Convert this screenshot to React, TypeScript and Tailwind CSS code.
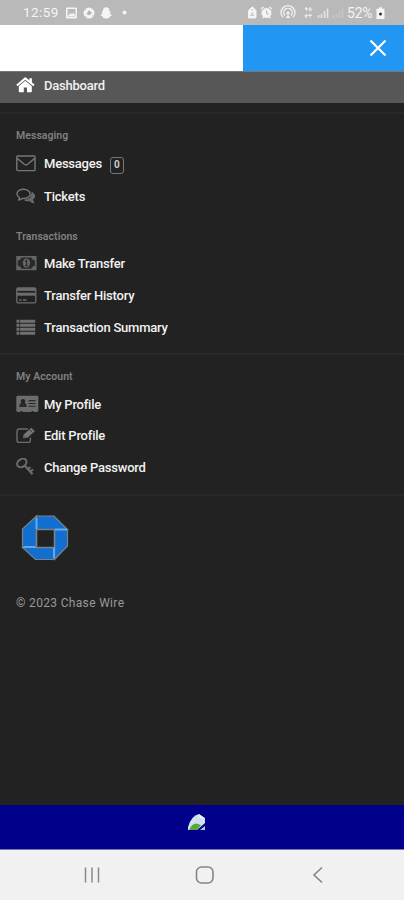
import type { ReactNode } from "react";

const EnvelopeIcon = () => (
  <svg width="20" height="17" viewBox="0 0 20 17" fill="none" stroke="#777" strokeWidth="1.4">
    <rect x="0.8" y="1" width="18.2" height="14.6" rx="0.8" />
    <path d="M1.200 3.400 8.300 9.300Q10 10.600 11.700 9.300L18.600 3.400" />
  </svg>
);

const CommentsIcon = () => (
  <svg width="20" height="17" viewBox="0 0 20 17" fill="none" stroke="#777" strokeWidth="1.4" strokeLinejoin="round">
    <path d="M7.600 1.200C3.900 1.200 1 3.200 1 5.900c0 1.600 1 2.900 2.600 3.800L2.500 12c1.400-.2 2.600-.8 3.500-1.600.5.100 1 .100 1.600.100 3.700 0 6.600-2 6.600-4.600S11.300 1.200 7.600 1.200Z" />
    <path d="M15.600 4.300c1.800.8 2.900 2.200 2.900 3.700 0 1.500-.8 2.700-2.200 3.500l1.500 3.300c-1.700-.2-3.100-1-4.100-2.100-1.800.3-3.600 0-5-.7 4 0 7-2.400 7-6" fill="#666" strokeWidth="0.9" />
  </svg>
);

const MoneyIcon = () => (
  <svg width="21" height="17" viewBox="0 0 21 17">
    <rect x="1" y="1.700" width="18.800" height="12.800" fill="#2a2a2a" stroke="#666" strokeWidth="1.500" />
    <path d="M1 1.700h4.500Q5 5.200 1 5.600ZM19.800 1.700h-4.500Q15.800 5.200 19.800 5.600ZM1 14.500h4.500Q5 11 1 10.600ZM19.800 14.500h-4.500Q15.800 11 19.800 10.600Z" fill="#666" />
    <ellipse cx="10.400" cy="8.100" rx="3.600" ry="4.600" fill="#666" />
    <path d="M9 6.600 10.600 5.400V10.600M8.900 10.700h3.200" stroke="#2a2a2a" strokeWidth="1.100" fill="none" />
  </svg>
);

const CardIcon = () => (
  <svg width="21" height="17" viewBox="0 0 21 17" fill="none" stroke="#6c6c6c">
    <rect x="0.800" y="1" width="19" height="14.800" rx="1.300" strokeWidth="1.300" />
    <path d="M1 2.500h18.600" strokeWidth="2.800" />
    <path d="M1 7.200h18.600" strokeWidth="3" />
    <path d="M3.200 13h2.500M7 13h3.500" strokeWidth="1.300" />
  </svg>
);

const ListIcon = () => (
  <svg width="20" height="17" viewBox="0 0 20 17" fill="none" stroke="#707070" strokeWidth="3.100">
    <path d="M0.500 2.200h2.900M4.100 2.200h15.100M0.500 6.200h2.900M4.100 6.200h15.100M0.500 10.200h2.900M4.100 10.200h15.100M0.500 14.200h2.900M4.100 14.200h15.100" />
  </svg>
);

const AddressCardIcon = () => (
  <svg width="23" height="18" viewBox="0 0 23 18">
    <rect x="0.300" y="0.700" width="22" height="16.300" rx="1.400" fill="#6c6c6c" />
    <circle cx="7" cy="6.300" r="2.200" fill="#222" />
    <path d="M3.300 12Q3.300 8 5.500 8h3Q10.700 8 10.700 12ZM12.500 5h7v1.300h-7ZM12.500 7.900h7v1.200h-7ZM12.500 10.700h7v1h-7ZM4.500 16h2v1h-2ZM15.500 16h2v1h-2Z" fill="#292929" />
  </svg>
);

const EditIcon = () => (
  <svg width="20" height="17" viewBox="0 0 20 17" fill="none" stroke="#6c6c6c" strokeWidth="1.400">
    <path d="M12 2H3.200Q1 2 1 4.200v9Q1 15.400 3.200 15.400h9q2.200 0 2.200-2.200v-2.600" />
    <path d="m7.200 10.900 1-3.600 7.100-6.300 3.300 3.300-7.200 6.100Z" fill="#777" strokeWidth="0.700" />
    <path d="m8.500 9.200 1 1M13.800 2.800l2.600 2.700" stroke="#222" strokeWidth="0.700" />
  </svg>
);

const KeyIcon = () => (
  <svg width="20" height="18" viewBox="0 0 20 18" fill="none" stroke="#6c6c6c">
    <ellipse cx="5.800" cy="5" rx="5" ry="3.800" transform="rotate(-35 5.800 5)" strokeWidth="2" />
    <path d="m8.800 7.800 7.800 8.500M12.200 11l2.200-1.900M14.500 13.500l2.600-2.100" strokeWidth="2.100" />
  </svg>
);

const HomeIcon = () => (
  <svg width="19" height="17" viewBox="0 0 19 17" fill="#fff">
    <path d="M9.300 3.800 2.800 9.200v5.300q0 .8.8.8h4.200v-4.800h3.200v4.800h4q.8 0 .8-.8V9.200Z" />
    <path d="m.9 8.400 8.400-7 8.600 7" fill="none" stroke="#fff" strokeWidth="2" />
    <path d="M13.400 1.200h2.500v5.600l-2.500-2Z" />
  </svg>
);

const StatusBar = () => (
  <div className="flex h-[25px] items-center bg-[#b9b9b9] pl-[23px] pr-[19px] text-[#f5f5f5]">
    <span className="w-[37px] text-[13.500px] leading-none tracking-[0.400px]">12:59</span>
    <svg className="ml-[5px]" width="64" height="16" viewBox="0 0 64 16" fill="#f5f5f5">
      <path fillRule="evenodd" d="M2 2.500h9q1 0 1 1v9q0 1-1 1H2q-1 0-1-1v-9q0-1 1-1ZM2.600 4v7.500h7.900V4ZM3 11l2.400-3 1.600 1.600L8.500 7.500 10.300 11Z" />
      <circle cx="24" cy="8" r="5.500" />
      <path d="m24 5.500 2.500 2.200-2 2.400-2.600-1ZM19.500 5.500l2-1.500M26 3.500l1.500 1.500M20 11l2 1M27 11.500l1-2" fill="#b0b0b0" stroke="#b9b9b9" strokeWidth="0.700" />
      <path d="M41.200 2.200c2.300 0 3.300 1.600 3.200 4l1.400.3-.8 1.500c.4 1.300 1.200 2 2.200 2.500l-2.300 1-.5 1.200-3.200 1-3.200-1-.5-1.200-2.300-1c1-.5 1.800-1.200 2.200-2.500l-.8-1.500 1.400-.3c-.1-2.400.9-4 3.200-4Z" />
      <circle cx="59.500" cy="7.500" r="2" />
    </svg>
    <svg className="ml-auto" width="99" height="17" viewBox="0 0 99 17" fill="none" stroke="#f0f0f0">
      <path d="M1.500 14V6.500L5.300 2.800 9 6.500V14Z" fill="#f5f5f5" />
      <path d="M5.200 5v2M3.700 11.500 5.200 8.700 6.800 11.500Z" stroke="#b9b9b9" strokeWidth="0.800" />
      <circle cx="19.500" cy="9" r="4.600" fill="#f5f5f5" />
      <path d="m14 5 2.500-2M25 5l-2.500-2M15.500 14l1.500-1.500M23.500 14 22 12.500" strokeWidth="1.600" />
      <path d="M19.500 6.300V9l2 1.500" stroke="#b9b9b9" strokeWidth="1.100" />
      <path d="M36 13.500a7 7 0 1 1 10 0M38 11.500a4.200 4.200 0 1 1 6 0" strokeWidth="1.400" />
      <path d="M39.500 13.500q1.500-4 3 0Z" fill="#f5f5f5" />
      <circle cx="41" cy="9" r="1.200" fill="#f5f5f5" />
      <path d="M59.500 7V3l-1.500 2M63 3v4.500l2-2M59.500 9.500V14l-2-2M63 14V9.800l2 2M58 5h7M57.500 11.500h7" strokeWidth="1" opacity="0.850" />
      <path d="M71.500 14v-3M74.500 14V10M77.500 14V7M80.500 14V4.500" strokeWidth="1.700" opacity="0.750" />
      <path d="M86.500 14v-3M89.500 14V10M92.500 14V7M95.500 14V4.500" strokeWidth="1.600" opacity="0.250" />
    </svg>
    <span className="ml-[1px] w-[29px] whitespace-nowrap text-[14px] leading-none tracking-[-0.200px]">52%</span>
    <svg width="9" height="14" viewBox="0 0 9 14">
      <path d="M0.500 2.800h2.500V1.200h3v1.600h2.500V13H.5Z" fill="#f5f5f5" />
      <circle cx="4.500" cy="8" r="1.500" fill="#333" />
    </svg>
  </div>
);

const MenuItem = ({ icon, label, className, children }: { icon: ReactNode; label: string; className: string; children?: ReactNode }) => (
  <a className={`flex items-center pl-4 ${className}`}>
    <span className="w-7 shrink-0">{icon}</span>
    <span className="text-[13px] font-medium leading-none tracking-[-0.220px] text-[#f2f2f2]">{label}</span>
    {children}
  </a>
);

const SectionTitle = ({ children, className }: { children: ReactNode; className: string }) => (
  <h3 className={`flex items-center pl-4 pt-[2px] text-[10.500px] font-semibold leading-none tracking-[0.050px] text-[#808080] ${className}`}>{children}</h3>
);

const Divider = () => <div className="h-[2px] bg-[#292929]" />;

const Logo = () => (
  <svg width="48" height="46" viewBox="0 0 48 46" stroke="#77828c" strokeWidth="1.200">
    <path d="M15.500 1H33L46.500 14.500H15.500Z" fill="#126fd0" />
    <path d="M46.500 14.500V31L33.500 44.500V14.500Z" fill="#126fd0" />
    <path d="M33.500 44.500H14.500L1.500 32.500H33.500Z" fill="#126fd0" />
    <path d="M1.500 32.500V14L15.500 1V32.500Z" fill="#126fd0" />
    <path d="M15.500 14.500H33.500V32.500H15.500Z" fill="#222" strokeWidth="1.600" />
    <path d="M15.500 3v11M34 14.500h12M33 33v10M2.500 32h12" stroke="#65a9e7" strokeWidth="2" />
  </svg>
);

export default function App() {
  return (
    <div className="flex h-[900px] w-[404px] flex-col overflow-hidden bg-[#222] font-['Roboto',sans-serif]">
      <StatusBar />
      <header className="flex h-[46px] shrink-0 bg-white">
        <button className="ml-auto flex w-[161px] items-center justify-end bg-[#2196f3] pr-[17px]" aria-label="Close">
          <svg width="18" height="18" viewBox="0 0 18 18" stroke="#fff" strokeWidth="2.200">
            <path d="m1.500 1.500 15 15m0-15-15 15" />
          </svg>
        </button>
      </header>

      <nav className="flex flex-col">
        <MenuItem icon={<HomeIcon />} label="Dashboard" className="h-8 border-t border-[#777] bg-[#575757] pb-[4px]" />
        <div className="h-[9px]" />
        <Divider />

        <SectionTitle className="mt-[9px] h-6">Messaging</SectionTitle>
        <MenuItem icon={<EnvelopeIcon />} label="Messages" className="h-[33px]">
          <span className="ml-[8px] mt-[3px] flex h-[17px] w-[14px] items-center justify-center rounded-[3px] border border-[#777] text-[10px] font-bold leading-none text-[#ccc]">0</span>
        </MenuItem>
        <MenuItem icon={<CommentsIcon />} label="Tickets" className="h-[33px]" />

        <SectionTitle className="mt-[11px] h-6">Transactions</SectionTitle>
        <MenuItem icon={<MoneyIcon />} label="Make Transfer" className="h-[31px]" />
        <MenuItem icon={<CardIcon />} label="Transfer History" className="h-8" />
        <MenuItem icon={<ListIcon />} label="Transaction Summary" className="h-8" />
        <div className="h-[10px]" />
        <Divider />

        <SectionTitle className="mt-[9px] h-6">My Account</SectionTitle>
        <MenuItem icon={<AddressCardIcon />} label="My Profile" className="h-8" />
        <MenuItem icon={<EditIcon />} label="Edit Profile" className="h-[31px]" />
        <MenuItem icon={<KeyIcon />} label="Change Password" className="h-8" />
        <div className="h-[11px]" />
        <Divider />
      </nav>

      <div className="pl-[21px] pt-[19px]">
        <Logo />
      </div>
      <p className="mt-[35px] pl-4 text-[12px] leading-[14px] tracking-[0.330px] text-[#999]">© 2023 Chase Wire</p>

      <footer className="mt-auto shrink-0">
        <div className="flex h-[45px] justify-center border-b border-[#7777bb] bg-[#00008b] pr-[10px] pt-2">
          <svg width="20" height="19" viewBox="0 0 20 19">
            <path d="M1 17V14Q4 3 12 1l6 4v5L10 17Z" fill="#cfe0f7" />
            <path d="m12 1 1 4 5 1Z" fill="#f2f5fb" />
            <path d="M2 17q4-8 9-6l3 1-4 5Z" fill="#57a936" />
            <path d="m13 17 5-4v4Z" fill="#b9cbd5" />
          </svg>
        </div>
        <div className="flex h-[50px] items-center bg-[#f1f1f1] pl-[84px]">
          <svg width="16" height="18" viewBox="0 0 16 18" stroke="#888" strokeWidth="1.500">
            <path d="M1.500 1.500v15M8 1.500v15M14.500 1.500v15" />
          </svg>
          <svg className="ml-[95px]" width="20" height="20" viewBox="0 0 20 20" fill="none" stroke="#858585" strokeWidth="1.600">
            <rect x="1.500" y="2" width="16.500" height="16" rx="5" />
          </svg>
          <svg className="ml-[97px]" width="12" height="18" viewBox="0 0 12 18" fill="none" stroke="#858585" strokeWidth="1.600">
            <path d="M10 1.500 2 9l8 7.500" />
          </svg>
        </div>
      </footer>
    </div>
  );
}
